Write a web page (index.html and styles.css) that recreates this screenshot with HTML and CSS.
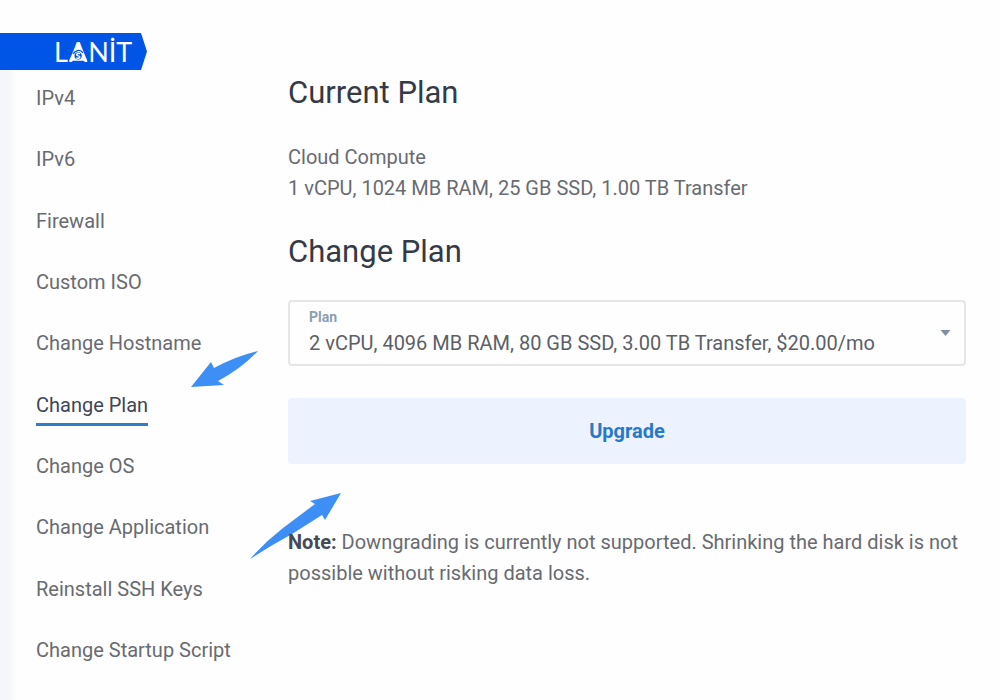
FILE: index.html
```html
<!DOCTYPE html>
<html lang="en">
<head>
  <meta charset="UTF-8">
  <meta name="viewport" content="width=device-width, initial-scale=1.0">
  <title>LANIT | Change Plan</title>
  <link rel="stylesheet" href="styles.css">
</head>
<body>
  <!-- Logo ribbon -->
  <header class="header">
    <a href="#" class="logo">
      <span>L</span>
      <span class="logo-a">A
        <svg viewBox="0 0 19 19" aria-hidden="true">
          <path d="M9.5 0L19 19H0Z" fill="#fff"/>
          <path d="M4.500 12C6 8 12 7 14.500 11" fill="none" stroke="#0054e6" stroke-width="1.300"/>
          <circle cx="9.500" cy="14" r="3.800" fill="#0054e6"/>
          <path d="M11.500 12C10 11 8 11.500 8 13C8 14.500 11.300 13.500 11.300 15.200C11.300 16.500 9 17 7.500 16" fill="none" stroke="#fff" stroke-width="1.500"/>
        </svg>
      </span>
      <span>NİT</span>
    </a>
  </header>

  <div class="page">
    <!-- Settings menu -->
    <nav class="menu">
      <a href="#ipv4">IPv4</a>
      <a href="#ipv6">IPv6</a>
      <a href="#firewall">Firewall</a>
      <a href="#iso">Custom ISO</a>
      <a href="#hostname">Change Hostname</a>
      <a href="#plan" class="active">Change Plan</a>
      <a href="#os">Change OS</a>
      <a href="#application">Change Application</a>
      <a href="#ssh">Reinstall SSH Keys</a>
      <a href="#startup">Change Startup Script</a>
    </nav>

    <!-- Plan settings -->
    <main class="content">
      <h2>Current Plan</h2>
      <p>Cloud Compute<br>1 vCPU, 1024 MB RAM, 25 GB SSD, 1.00 TB Transfer</p>

      <h2 class="change-title">Change Plan</h2>
      <form class="plan-form">
        <div class="field">
          <label for="plan">Plan</label>
          <select id="plan">
            <option>2 vCPU, 4096 MB RAM, 80 GB SSD, 3.00 TB Transfer, $20.00/mo</option>
          </select>
          <svg class="caret" viewBox="0 0 10 6" aria-hidden="true"><path d="M0 0H10L5 6Z" fill="#7f8fa0"/></svg>
        </div>
        <button type="button" class="upgrade">Upgrade</button>
      </form>
      <p class="note"><strong>Note:</strong> Downgrading is currently not supported. Shrinking the hard disk is not possible without risking data loss.</p>
    </main>
  </div>

  <!-- Pointer arrows -->
  <svg class="arrow arrow-menu" viewBox="0 0 68 38" aria-hidden="true">
    <path d="M67 1Q50 19 27 31L33 35L0 37L20 12L23 18Q45 6 67 1Z" fill="#3d8ff5"/>
  </svg>
  <svg class="arrow arrow-upgrade" viewBox="0 0 92 67" aria-hidden="true">
    <path d="M0 66Q15 49 33 35L65 11L60 8L91 0L75 27L72 22L42 41Q20 53 0 66Z" fill="#3d8ff5"/>
  </svg>
</body>
</html>
```
FILE: styles.css
```css
* {
  margin: 0;
  padding: 0;
  box-sizing: border-box;
}

body {
  display: flex;
  flex-direction: column;
  min-height: 100vh;
  position: relative;
  font-family: Roboto, 'Liberation Sans', sans-serif;
  font-size: 20px;
  line-height: 31px;
  color: #686b70;
  background-color: #fefefe;
}

/* Header */
.header {
  padding-top: 33px;
}

.logo {
  display: flex;
  align-items: center;
  gap: 1px;
  width: 147px;
  height: 37px;
  padding-left: 54px;
  background-color: #0054e6;
  clip-path: polygon(0 0, 141px 0, 100% 50%, 141px 100%, 0 100%);
  color: white;
  font-family: Lato, 'Liberation Sans', sans-serif;
  font-size: 27px;
  text-decoration: none;
}

.logo-a {
  position: relative;
}

.logo-a svg {
  position: absolute;
  left: 0;
  top: 6px;
  width: 100%;
  height: 19px;
}

/* Layout */
.page {
  display: flex;
  flex: 1;
  padding-right: 34px;
  background: linear-gradient(90deg, #f5f6f9 8px, #fefefe 16px);
}

.menu {
  display: flex;
  flex-direction: column;
  justify-content: space-between;
  align-items: flex-start;
  width: 288px;
  padding: 13px 0 34px 36px;
}

.menu a {
  color: #686b70;
  text-decoration: none;
}

.menu a.active {
  position: relative;
  color: #3f4654;
}

.menu a.active::after {
  content: "";
  position: absolute;
  left: 0;
  right: 0;
  bottom: -5px;
  height: 3px;
  background-color: #2f7fc8;
}

.content {
  flex: 1;
  position: relative;
  z-index: 1;
}

h2 {
  margin: 3px 0 29px;
  font-size: 31px;
  font-weight: 400;
  line-height: 40px;
  color: #343a46;
}

h2.change-title {
  margin: 28px 0;
}

/* Plan form */
.field {
  position: relative;
  margin-bottom: 32px;
}

.field label {
  position: absolute;
  left: 21px;
  top: 8px;
  font-size: 14px;
  font-weight: 700;
  line-height: 18px;
  color: #8ba0b2;
}

.field select {
  width: 100%;
  height: 66px;
  padding: 20px 40px 0 19px;
  appearance: none;
  border: 2px solid #e6e6e8;
  border-radius: 4px;
  background-color: #fefefe;
  font: inherit;
  color: #5c6066;
}

.caret {
  position: absolute;
  right: 15px;
  top: 30px;
  width: 11px;
  height: 6px;
  pointer-events: none;
}

.upgrade {
  width: 100%;
  height: 66px;
  border: none;
  border-radius: 4px;
  background-color: #ecf3fe;
  color: #2779c8;
  font: inherit;
  font-weight: 700;
}

.note {
  margin-top: 63px;
}

.note strong {
  color: #454a55;
}

/* Arrows on the page */
.arrow {
  position: absolute;
  pointer-events: none;
}

.arrow-menu {
  left: 191px;
  top: 350px;
  width: 68px;
  height: 38px;
}

.arrow-upgrade {
  left: 250px;
  top: 493px;
  width: 92px;
  height: 67px;
}
```
